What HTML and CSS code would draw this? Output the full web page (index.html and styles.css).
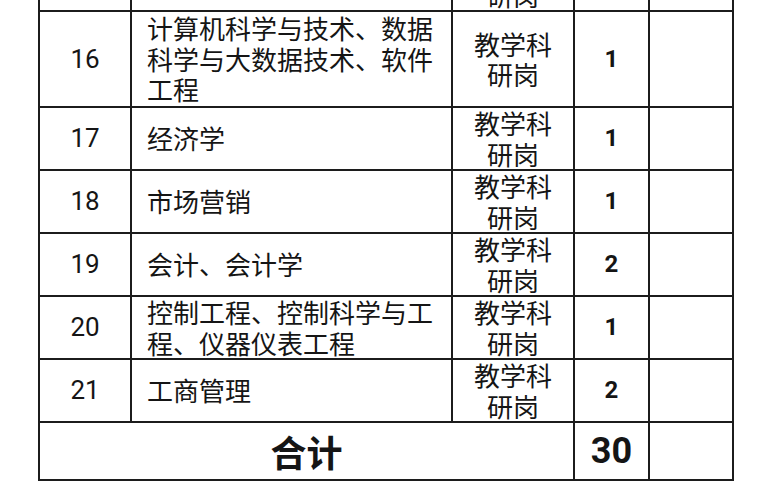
FILE: index.html
```html
<!DOCTYPE html>
<html lang="zh-CN">
<head>
<meta charset="utf-8">
<link rel="stylesheet" href="styles.css">
</head>
<body>
<table class="posts">
  <colgroup>
    <col class="c-no"><col class="c-major"><col class="c-type"><col class="c-num"><col class="c-note">
  </colgroup>
  <tbody>
    <tr class="r2">
      <td class="no"></td><td class="major"></td><td class="type">教学科研岗</td><td class="num"></td><td></td>
    </tr>
    <tr class="r3">
      <td class="no">16</td><td class="major">计算机科学与技术、数据科学与大数据技术、软件工程</td><td class="type">教学科研岗</td><td class="num">1</td><td></td>
    </tr>
    <tr class="r2">
      <td class="no">17</td><td class="major">经济学</td><td class="type">教学科研岗</td><td class="num">1</td><td></td>
    </tr>
    <tr class="r2">
      <td class="no">18</td><td class="major">市场营销</td><td class="type">教学科研岗</td><td class="num">1</td><td></td>
    </tr>
    <tr class="r2">
      <td class="no">19</td><td class="major">会计、会计学</td><td class="type">教学科研岗</td><td class="num">2</td><td></td>
    </tr>
    <tr class="r2">
      <td class="no">20</td><td class="major">控制工程、控制科学与工程、仪器仪表工程</td><td class="type">教学科研岗</td><td class="num">1</td><td></td>
    </tr>
    <tr class="r2">
      <td class="no">21</td><td class="major">工商管理</td><td class="type">教学科研岗</td><td class="num">2</td><td></td>
    </tr>
    <tr class="total">
      <td class="total-label" colspan="3">合计</td><td class="total-num">30</td><td></td>
    </tr>
  </tbody>
</table>
</body>
</html>
```

FILE: styles.css
```css
html, body {
  margin: 0;
  padding: 0;
  background: #ffffff;
}

body {
  font-family: "Noto Sans CJK SC", "Noto Sans", sans-serif;
  color: #151515;
}

.posts {
  border-collapse: collapse;
  table-layout: fixed;
  width: 695px;
  margin-top: -53px;
  margin-left: 38px;
}

.c-no { width: 92px; }
.c-major { width: 321px; }
.c-type { width: 122px; }
.c-num { width: 75px; }
.c-note { width: 84px; }

.posts td {
  border: 2px solid #1c1c1c;
  padding: 0;
  vertical-align: middle;
  font-size: 26px;
  line-height: 30.5px;
}

.r2 { height: 63px; }
.r3 { height: 96px; }
.total { height: 58px; }

.no {
  text-align: center;
  font-family: Roboto, "Noto Sans", sans-serif;
  font-size: 24px;
}

.major {
  text-align: left;
  padding: 0 10px 0 15px !important;
}

.type {
  text-align: center;
  padding: 0 10px !important;
}

.num {
  text-align: center;
  font-family: Roboto, "Noto Sans", sans-serif;
  font-weight: bold;
  font-size: 24px !important;
}

.total-label {
  text-align: center;
  font-weight: bold;
  font-size: 36px !important;
  line-height: 40px !important;
}

.total-num {
  text-align: center;
  font-family: Roboto, "Noto Sans", sans-serif;
  font-weight: bold;
  font-size: 36px !important;
  line-height: 40px !important;
}
```
